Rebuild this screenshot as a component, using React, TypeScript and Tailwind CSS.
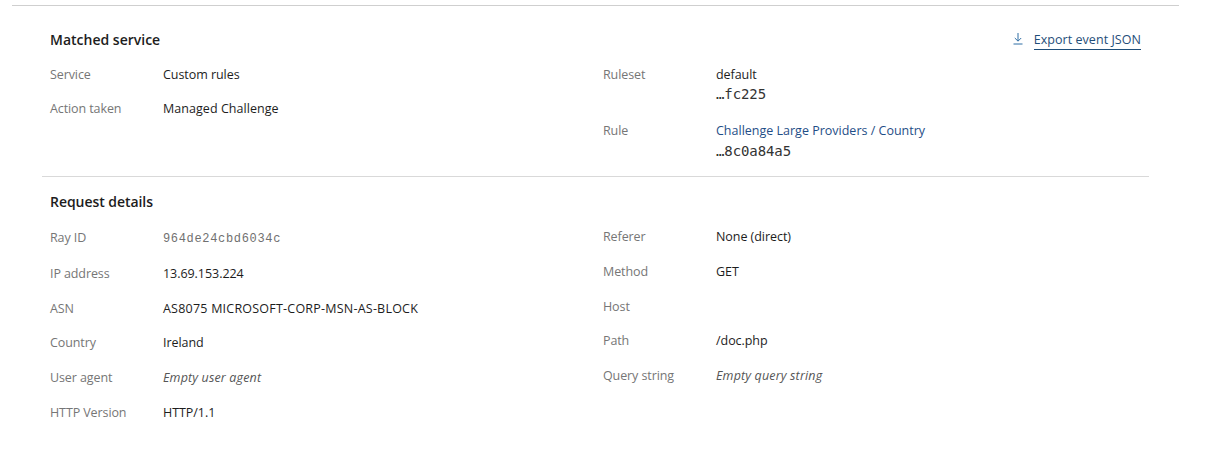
import React from "react";

const font = { fontFamily: '"Open Sans", "Noto Sans", sans-serif' };

function Row({ label, h, children }: { label: string; h: string; children?: React.ReactNode }) {
  return (
    <div className={`flex items-start ${h}`}>
      <div className="w-[113px] shrink-0 text-[12.5px] leading-[18px] text-[#767676] tracking-[-0.1px]">{label}</div>
      <div className="text-[12.5px] leading-[18px] text-[#1d1d1d] tracking-[-0.05px]">{children}</div>
    </div>
  );
}

const Hash = ({ children, mt }: { children: React.ReactNode; mt: string }) => (
  <div className={`${mt} text-[14px] leading-[19px] text-[#333] [font-family:'DejaVu_Sans_Mono',monospace] tracking-[-0.1px]`}>{children}</div>
);

export default function App() {
  return (
    <div className="w-[1220px] h-[452px] bg-white overflow-hidden pt-[5px] pl-3" style={font}>
      <div className="w-[1167px] border-t border-[#cfcfcf] px-[30px]">
        <section className="w-[1091px] h-[146px] border-b border-[#d9d9d9] px-2 pt-6 box-content -mb-px">
          <div className="flex items-center justify-between h-[19px]">
            <h2 className="text-[14px] font-semibold leading-[19px] text-[#1d1d1d]">Matched service</h2>
            <a className="flex items-center gap-[10px] text-[12.5px] leading-[16px] text-[#1f4e79] translate-y-[1px] tracking-[0.05px]">
              <svg width="12" height="13" viewBox="0 0 12 13" fill="none" stroke="#2f6ea5" strokeWidth="1" className="-translate-y-[2px]">
                <path d="M6 1v8M2.8 6L6 9.2 9.2 6M1.5 12h9" />
              </svg>
              <span className="border-b border-[#1f4e79] pb-[1px]">Export event JSON</span>
            </a>
          </div>
          <div className="grid grid-cols-[553px_1fr] mt-[17px]">
            <div>
              <Row label="Service" h="h-[34px]">Custom rules</Row>
              <Row label="Action taken" h="h-[34px]"><span className="tracking-[0.05px]">Managed Challenge</span></Row>
            </div>
            <div>
              <Row label="Ruleset" h="h-[56px]">
                <div>default</div>
                <Hash mt="mt-px">…fc225</Hash>
              </Row>
              <Row label="Rule" h="h-[40px]">
                <a className="text-[#1f4e87] tracking-[0px]">Challenge Large Providers / Country</a>
                <Hash mt="mt-[2px]">…8c0a84a5</Hash>
              </Row>
            </div>
          </div>
        </section>
        <section className="px-2 pt-4">
          <h2 className="text-[14px] font-semibold leading-[19px] text-[#1d1d1d] tracking-[-0.05px]">Request details</h2>
          <div className="grid grid-cols-[553px_1fr] mt-[18px]">
            <div>
              <Row label="Ray ID" h="h-[36px]">
                <span className="[font-family:'Liberation_Mono',monospace] text-[12px] text-[#707070] tracking-[0.67px]">964de24cbd6034c</span>
              </Row>
              <Row label="IP address" h="h-[35px]">13.69.153.224</Row>
              <Row label="ASN" h="h-[34px]"><span className="tracking-[0.22px]">AS8075 MICROSOFT-CORP-MSN-AS-BLOCK</span></Row>
              <Row label="Country" h="h-[35px]">Ireland</Row>
              <Row label="User agent" h="h-[35px]"><em className="text-[#555] tracking-[0.15px]">Empty user agent</em></Row>
              <Row label="HTTP Version" h="h-[35px]">HTTP/1.1</Row>
            </div>
            <div className="-mt-px">
              <Row label="Referer" h="h-[35px]">None (direct)</Row>
              <Row label="Method" h="h-[35px]">GET</Row>
              <Row label="Host" h="h-[34px]"></Row>
              <Row label="Path" h="h-[35px]">/doc.php</Row>
              <Row label="Query string" h="h-[35px]"><em className="text-[#555] tracking-[0.15px]">Empty query string</em></Row>
            </div>
          </div>
        </section>
      </div>
    </div>
  );
}
